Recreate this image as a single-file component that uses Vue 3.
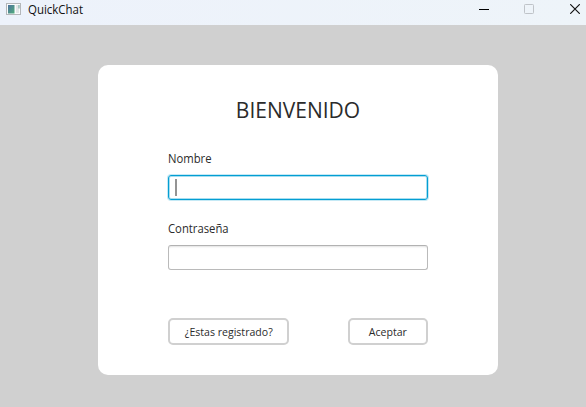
<script setup>
import { ref } from 'vue'

const nombre = ref('')
const clave = ref('')
</script>

<template>
  <div class="window">
    <header class="titlebar">
      <svg class="app-icon" width="16" height="14" viewBox="0 0 16 14">
        <defs>
          <linearGradient id="pane" x1="0" y1="0" x2="1" y2="1">
            <stop offset="0" stop-color="#4f739f" />
            <stop offset="1" stop-color="#50ac7b" />
          </linearGradient>
        </defs>
        <rect x="0.5" y="0.5" width="14" height="11" fill="#fafbfc" stroke="#b4b7ba" />
        <rect x="2" y="2" width="6.5" height="8.5" fill="url(#pane)" />
        <rect x="10" y="2" width="3" height="8" fill="#e3e6e8" />
        <path d="M13 2v3.5" stroke="#6fa89c" />
      </svg>
      <span class="app-name">QuickChat</span>
      <div class="controls">
        <svg width="10" height="10" viewBox="0 0 10 10"><path d="M0 5.5H10" stroke="#000" /></svg>
        <svg width="10" height="10" viewBox="0 0 10 10"><rect x=".5" y=".5" width="9" height="9" rx=".8" fill="none" stroke="#bfc3c8" /></svg>
        <svg class="close" width="10" height="10" viewBox="0 0 10 10"><path d="M.2.2l9.6 9.6M9.8.2L.2 9.8" stroke="#111" stroke-width="1.15" /></svg>
      </div>
    </header>
    <main class="content">
      <form class="card" @submit.prevent>
        <h1><span>BIENVENIDO</span></h1>
        <label class="lbl-name" for="nombre"><span>Nombre</span></label>
        <div class="field focused">
          <i class="caret"></i>
          <input id="nombre" v-model="nombre" type="text" />
        </div>
        <label class="lbl-pass" for="clave"><span>Contraseña</span></label>
        <div class="field">
          <input id="clave" v-model="clave" type="password" />
        </div>
        <div class="actions">
          <button class="register" type="button"><span>¿Estas registrado?</span></button>
          <button class="accept" type="submit"><span>Aceptar</span></button>
        </div>
      </form>
    </main>
  </div>
</template>

<style>
body {
  margin: 0;
  overflow: hidden;
}
</style>

<style scoped>
.window {
  width: 586px;
  height: 407px;
  display: flex;
  flex-direction: column;
  background: #d0d0d0;
  font-family: "Open Sans", "Noto Sans", sans-serif;
  color: #2b2b2b;
}
.titlebar {
  box-sizing: border-box;
  height: 25px;
  flex: none;
  display: flex;
  align-items: flex-start;
  padding: 3px 6px 0;
  background: linear-gradient(90deg, #edf2fb, #eef4f9);
}
.app-icon {
  flex: none;
}
.app-name {
  margin-left: 6px;
  font-size: 12px;
  line-height: 14px;
  color: #111;
  transform: scaleX(0.955);
  transform-origin: left;
}
.controls {
  display: flex;
  gap: 35px;
  margin-left: auto;
  padding-top: 1px;
}
.close {
  margin-left: 1px;
}
.content {
  flex: 1;
  display: flex;
  justify-content: center;
  align-items: flex-start;
  padding: 40px 0 0 10px;
}
.card {
  box-sizing: border-box;
  width: 400px;
  height: 310px;
  padding: 30px 70px;
  border-radius: 10px;
  background: #fff;
}
span {
  display: inline-block;
  white-space: nowrap;
}
h1 {
  margin: 0;
  height: 30px;
  line-height: 30px;
  font-size: 21px;
  font-weight: 400;
  text-align: center;
}
label {
  display: block;
  height: 20px;
  line-height: 20px;
  font-size: 12px;
}
label span {
  transform: scaleX(0.94);
  transform-origin: left;
}
.lbl-name {
  margin: 24px 0 6px;
}
.lbl-pass {
  margin: 19px 0 6px;
}
.field {
  box-sizing: border-box;
  height: 25px;
  display: flex;
  align-items: center;
  padding: 0 6px;
  border: 1px solid #bababa;
  border-top-color: #b2b2b2;
  border-radius: 3px;
  box-shadow: inset 0 2px 2px -1px #e2e2e2;
}
.focused {
  border-color: #039ed3;
  box-shadow: 0 0 0 1px #c5e9f5, inset 0 0 0 1px #a8def0;
}
.caret {
  width: 2px;
  height: 17px;
  background: #949494;
}
input {
  flex: 1;
  min-width: 0;
  padding: 0;
  border: 0;
  outline: 0;
  background: transparent;
}
.actions {
  display: flex;
  justify-content: space-between;
  margin-top: 48px;
}
button {
  box-sizing: border-box;
  height: 27px;
  padding: 0;
  border: 2px solid #d0d0d0;
  border-radius: 5px;
  background: #fff;
  color: #2b2b2b;
  font: 11px/20px "Open Sans", "Noto Sans", sans-serif;
}
button span {
  transform: scaleX(0.96);
}
.register {
  width: 121px;
}
.accept {
  width: 80px;
}
</style>
